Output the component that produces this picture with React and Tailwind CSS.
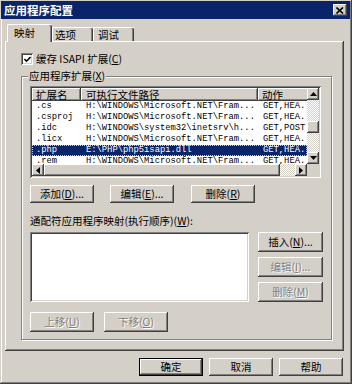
import React from "react";

const FONT = "font-['Noto_Sans_CJK_SC','Noto_Sans',sans-serif]";
const MONO = "font-['Liberation_Mono','DejaVu_Sans_Mono',monospace]";
const RAISED = "shadow-[inset_-1px_-1px_#404040,inset_1px_1px_#ffffff,inset_-2px_-2px_#808080]";
const SUNKEN = "shadow-[inset_1px_1px_#808080,inset_-1px_-1px_#ffffff,inset_2px_2px_#404040,inset_-2px_-2px_#d4d0c8]";
const DITHER = "bg-[image:repeating-conic-gradient(#ffffff_0%_25%,#d4d0c8_0%_50%)] bg-[length:2px_2px]";
const DISABLED = "text-[#808080] [text-shadow:1px_1px_0_#ffffff]";

function Btn({ children, className = "", disabled = false, isDefault = false }) {
  return (
    <div className={`shrink-0 bg-[#d4d0c8] ${isDefault ? "border border-black" : ""} ${className}`}>
      <div className={`w-full h-full flex items-center justify-center leading-[12px] ${RAISED} ${disabled ? DISABLED : "text-black"}`}>
        {children}
      </div>
    </div>
  );
}

function Arrow({ dir }) {
  if (dir === "up")
    return (
      <svg width="7" height="4" viewBox="0 0 7 4">
        <polygon points="3.5,0 7,4 0,4" fill="#000" />
      </svg>
    );
  if (dir === "down")
    return (
      <svg width="7" height="4" viewBox="0 0 7 4">
        <polygon points="0,0 7,0 3.5,4" fill="#000" />
      </svg>
    );
  if (dir === "left")
    return (
      <svg width="4" height="7" viewBox="0 0 4 7">
        <polygon points="4,0 4,7 0,3.5" fill="#000" />
      </svg>
    );
  return (
    <svg width="4" height="7" viewBox="0 0 4 7">
      <polygon points="0,0 0,7 4,3.5" fill="#000" />
    </svg>
  );
}

function SBtn({ dir }) {
  return (
    <div className={`w-[12px] h-[12px] shrink-0 bg-[#d4d0c8] flex items-center justify-center ${RAISED}`}>
      <Arrow dir={dir} />
    </div>
  );
}

const rows = [
  [".cs", "H:\\WINDOWS\\Microsoft.NET\\Fram...", "GET,HEA..."],
  [".csproj", "H:\\WINDOWS\\Microsoft.NET\\Fram...", "GET,HEA..."],
  [".idc", "H:\\WINDOWS\\system32\\inetsrv\\h...", "GET,POST"],
  [".licx", "H:\\WINDOWS\\Microsoft.NET\\Fram...", "GET,HEA..."],
  [".php", "E:\\PHP\\php5isapi.dll", "GET,HEA...", true],
  [".rem", "H:\\WINDOWS\\Microsoft.NET\\Fram...", "GET,HEA..."],
];

export default function App() {
  return (
    <div
      className={`w-[352px] h-[384px] bg-[#d4d0c8] overflow-hidden flex flex-col pl-[1px] pt-[1px] pr-[2px] text-[10.5px] leading-[12px] text-black ${FONT} shadow-[inset_-1px_-1px_#404040,inset_1px_1px_#d4d0c8,inset_-2px_-2px_#808080,inset_2px_2px_#ffffff]`}
    >
      {/* Title bar */}
      <div className="h-[18px] shrink-0 bg-[#0a246a] flex items-center justify-between pl-[3px] pr-[3px]">
        <span className="text-white font-bold text-[11.5px] leading-[14px]">应用程序配置</span>
        <div className={`w-[14px] h-[12px] bg-[#d4d0c8] flex items-center justify-center ${RAISED}`}>
          <svg width="8" height="7" viewBox="0 0 8 7">
            <path d="M0.5 0.5 L7 6.5 M7 0.5 L0.5 6.5" stroke="#000" strokeWidth="1.6" />
          </svg>
        </div>
      </div>

      {/* Tabs */}
      <div className="h-[17px] mt-[5px] shrink-0 flex items-end pl-[6px]">
        <div className="relative z-10 -mb-[1px] w-[45px] h-[18px] bg-[#d4d0c8] border-l border-t border-white rounded-t-[2px] shadow-[inset_-1px_0_#404040,inset_-2px_0_#808080] pl-[6px] pt-[2px]">
          映射
        </div>
        <div className="w-[41px] h-[14px] border-l border-t border-white rounded-t-[2px] shadow-[inset_-1px_0_#404040,inset_-2px_0_#808080] pl-[2px] pt-[1px]">
          选项
        </div>
        <div className="w-[41px] h-[14px] border-l border-t border-white rounded-t-[2px] shadow-[inset_-1px_0_#404040,inset_-2px_0_#808080] pl-[4px] pt-[1px]">
          调试
        </div>
      </div>

      {/* Tab panel */}
      <div className="ml-[4px] w-[339px] h-[310px] shrink-0 flex flex-col pl-[16px] pt-[12px] shadow-[inset_-1px_-1px_#404040,inset_1px_1px_#ffffff,inset_-2px_-2px_#808080]">
        {/* checkbox */}
        <div className="flex items-center h-[12px]">
          <div className={`w-[12px] h-[12px] bg-white flex items-center justify-center ${SUNKEN}`}>
            <svg width="7" height="7" viewBox="0 0 7 7">
              <polyline points="0.5,3 2.5,5.2 6.5,1" fill="none" stroke="#000" strokeWidth="1.6" />
            </svg>
          </div>
          <span className="ml-[3px]">
            缓存 ISAPI 扩展(<u>C</u>)
          </span>
        </div>

        {/* group */}
        <div className="relative mt-[11px] w-[311px] h-[264px] border border-[#808080] shadow-[inset_1px_1px_#ffffff,1px_1px_#ffffff] pl-[8px] pt-[9px] flex flex-col">
          <span className="absolute -top-[7px] left-[6px] px-[1px] bg-[#d4d0c8] leading-[12px]">
            应用程序扩展(<u>X</u>)
          </span>

          {/* list view */}
          <div className={`w-[291px] h-[92px] bg-white p-[2px] ${SUNKEN}`}>
            <div className="flex flex-col w-full h-full">
              <div className="flex h-[76px]">
                <div className="w-[275px] h-full overflow-hidden flex flex-col">
                  <div className="flex h-[13px] shrink-0 bg-[#d4d0c8] leading-[13px]">
                    <div className={`w-[49px] shrink-0 pl-[4px] ${RAISED}`}>扩展名</div>
                    <div className={`w-[177px] shrink-0 pl-[5px] ${RAISED}`}>可执行文件路径</div>
                    <div className={`w-[60px] shrink-0 pl-[4px] ${RAISED}`}>动作</div>
                  </div>
                  {rows.map(([ext, path, act, sel]) => (
                    <div
                      key={ext}
                      className={`flex h-[11px] shrink-0 leading-[11px] text-[8.8px] whitespace-nowrap ${MONO} ${
                        sel ? "bg-[#0a246a] text-white outline-1 outline-dotted outline-[#c8c8c8] -outline-offset-1" : "text-black"
                      }`}
                    >
                      <div className="w-[49px] shrink-0 pl-[4px] overflow-hidden">{ext}</div>
                      <div className="w-[177px] shrink-0 pl-[5px] overflow-hidden">{path}</div>
                      <div className="w-[60px] shrink-0 pl-[5px] overflow-hidden">{act}</div>
                    </div>
                  ))}
                </div>
                <div className="w-[12px] h-full flex flex-col">
                  <SBtn dir="up" />
                  <div className={`h-[21px] ${DITHER}`} />
                  <div className={`h-[12px] bg-[#d4d0c8] ${RAISED}`} />
                  <div className={`h-[19px] ${DITHER}`} />
                  <SBtn dir="down" />
                </div>
              </div>
              <div className="flex h-[12px]">
                <SBtn dir="left" />
                <div className={`w-[236px] h-full bg-[#d4d0c8] ${RAISED}`} />
                <div className={`w-[15px] h-full ${DITHER}`} />
                <SBtn dir="right" />
                <div className="w-[12px] h-full bg-[#d4d0c8]" />
              </div>
            </div>
          </div>

          {/* buttons row */}
          <div className="flex mt-[7px]">
            <Btn className="w-[64px] h-[18px]">
              添加(<u>D</u>)...
            </Btn>
            <Btn className="w-[64px] h-[18px] ml-[16px]">
              编辑(<u>E</u>)...
            </Btn>
            <Btn className="w-[64px] h-[18px] ml-[17px]">
              删除(<u>R</u>)
            </Btn>
          </div>

          <div className="mt-[12px] h-[12px]">
            通配符应用程序映射(执行顺序)(<u>W</u>):
          </div>

          <div className="flex mt-[5px]">
            <div className={`w-[219px] h-[70px] bg-white ${SUNKEN}`} />
            <div className="ml-[9px] flex flex-col gap-[5px]">
              <Btn className="w-[65px] h-[20px]">
                插入(<u>N</u>)...
              </Btn>
              <Btn className="w-[65px] h-[20px]" disabled>
                编辑(<u>I</u>)...
              </Btn>
              <Btn className="w-[65px] h-[20px]" disabled>
                删除(<u>M</u>)
              </Btn>
            </div>
          </div>

          <div className="flex mt-[10px]">
            <Btn className="w-[64px] h-[20px]" disabled>
              上移(<u>U</u>)
            </Btn>
            <Btn className="w-[64px] h-[20px] ml-[10px]" disabled>
              下移(<u>O</u>)
            </Btn>
          </div>
        </div>
      </div>

      {/* bottom buttons */}
      <div className="flex justify-end gap-[6px] mt-[7px] pr-[7px]">
        <Btn className="w-[64px] h-[18px]" isDefault>
          确定
        </Btn>
        <Btn className="w-[64px] h-[18px]">取消</Btn>
        <Btn className="w-[64px] h-[18px]">帮助</Btn>
      </div>
    </div>
  );
}
